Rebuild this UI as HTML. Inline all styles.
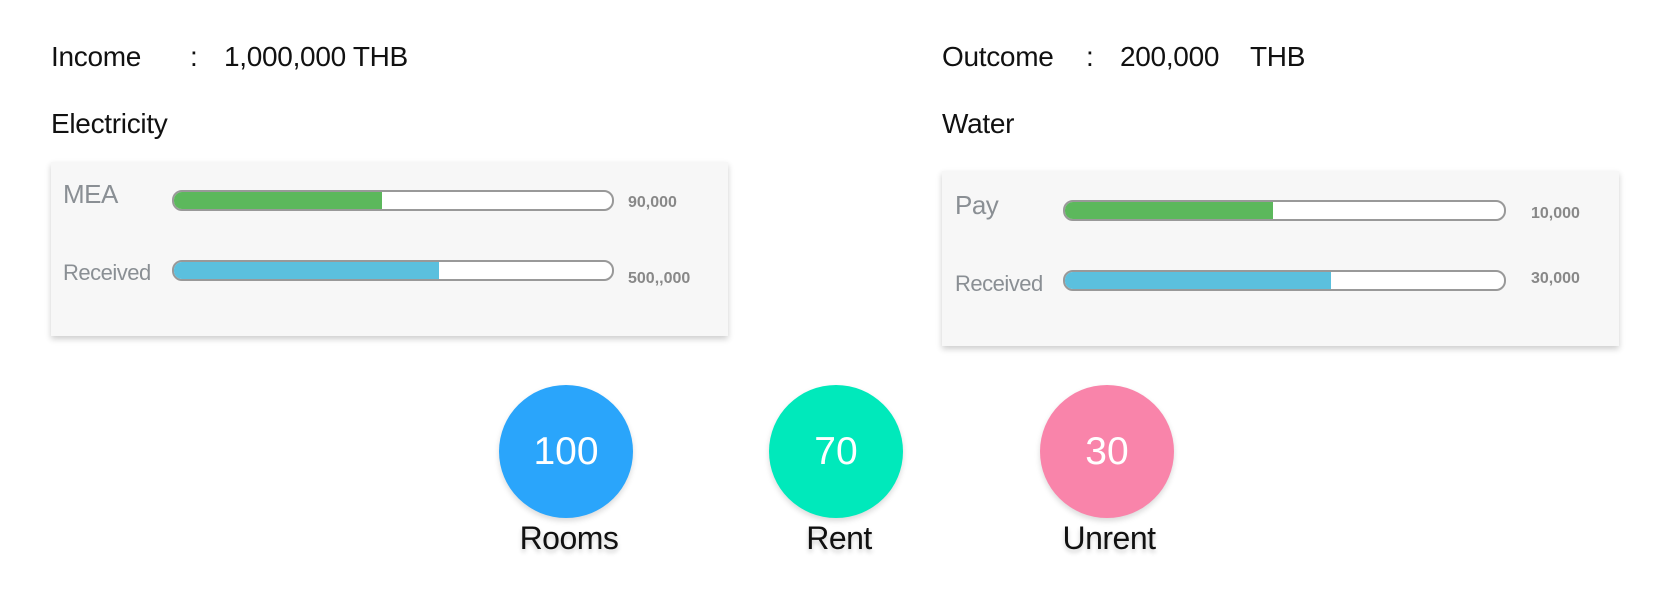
<!DOCTYPE html>
<html><head><style>
*{margin:0;padding:0;box-sizing:border-box}
body{width:1657px;height:614px;background:#fff;font-family:"Liberation Sans",Arial,sans-serif;position:relative;overflow:hidden;color:#111}
.a{position:absolute;white-space:nowrap}
.h{font-size:28px;line-height:30px;letter-spacing:-0.3px}
.card{position:absolute;background:#f7f7f7;box-shadow:0 3px 6px rgba(0,0,0,0.2)}
.lbl{position:absolute;color:#8a8f94;white-space:nowrap;letter-spacing:-0.5px}
.bar{position:absolute;height:21px;border:2px solid #999;border-radius:10px;background:#fff;overflow:hidden}
.bar div{height:100%}
.val{position:absolute;color:#888;font-size:16px;font-weight:bold;white-space:nowrap}
.c{position:absolute;width:134px;height:133px;border-radius:50%;color:#fff;font-size:39px;text-align:center;line-height:133px;box-shadow:0 3px 6px rgba(0,0,0,0.15)}
.t{position:absolute;font-size:32px;text-align:center;width:200px;text-shadow:0 3px 5px rgba(0,0,0,0.2);letter-spacing:-0.5px}
</style></head><body>
<div class="a h" style="left:51px;top:42px">Income</div>
<div class="a h" style="left:190px;top:42px">:</div>
<div class="a h" style="left:224px;top:42px">1,000,000 THB</div>
<div class="a h" style="left:942px;top:42px">Outcome</div>
<div class="a h" style="left:1086px;top:42px">:</div>
<div class="a h" style="left:1120px;top:42px">200,000</div>
<div class="a h" style="left:1250px;top:42px">THB</div>
<div class="a h" style="left:51px;top:109px">Electricity</div>
<div class="a h" style="left:942px;top:109px">Water</div>

<div class="card" style="left:51px;top:162px;width:677px;height:174px"></div>
<div class="lbl" style="left:63px;top:179px;font-size:26px">MEA</div>
<div class="bar" style="left:172px;top:190px;width:442px"><div style="width:208px;background:#5cb85c"></div></div>
<div class="val" style="left:628px;top:194px">90,000</div>
<div class="lbl" style="left:63px;top:260px;font-size:22px">Received</div>
<div class="bar" style="left:172px;top:260px;width:442px"><div style="width:265px;background:#5bc0de"></div></div>
<div class="val" style="left:628px;top:270px">500,,000</div>

<div class="card" style="left:942px;top:171px;width:677px;height:175px"></div>
<div class="lbl" style="left:955px;top:190px;font-size:26px">Pay</div>
<div class="bar" style="left:1063px;top:200px;width:443px"><div style="width:208px;background:#5cb85c"></div></div>
<div class="val" style="left:1531px;top:205px">10,000</div>
<div class="lbl" style="left:955px;top:271px;font-size:22px">Received</div>
<div class="bar" style="left:1063px;top:270px;width:443px"><div style="width:266px;background:#5bc0de"></div></div>
<div class="val" style="left:1531px;top:270px">30,000</div>

<div class="c" style="left:499px;top:385px;background:#2aa5fb">100</div>
<div class="c" style="left:769px;top:385px;background:#00e9bb">70</div>
<div class="c" style="left:1040px;top:385px;background:#f984aa">30</div>
<div class="t" style="left:469px;top:520px">Rooms</div>
<div class="t" style="left:739px;top:520px">Rent</div>
<div class="t" style="left:1009px;top:520px">Unrent</div>
</body></html>
